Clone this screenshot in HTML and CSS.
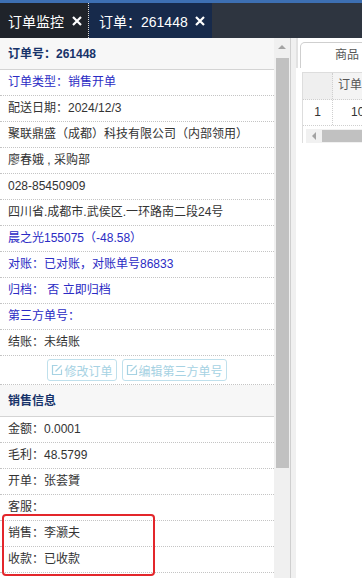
FILE: index.html
```html
<!DOCTYPE html>
<html lang="zh-CN">
<head>
  <meta charset="UTF-8">
  <meta name="viewport" content="width=device-width, initial-scale=1.0">
  <title>订单：261448</title>
  <link rel="stylesheet" href="styles.css">
</head>
<body>

<div class="topline"></div>
<div class="tabbar">
  <div class="tab">
    <span>订单监控</span>
    <svg class="close" viewBox="0 0 10 10"><path d="M1 1L9 9M9 1L1 9"/></svg>
  </div>
  <div class="tab active">
    <span>订单：261448</span>
    <svg class="close" viewBox="0 0 10 10"><path d="M1 1L9 9M9 1L1 9"/></svg>
  </div>
</div>

<div class="main">
  <div class="left">
    <div class="panel-head first">订单号：261448</div>
    <div class="row blue">订单类型：销售开单</div>
    <div class="row">配送日期：2024/12/3</div>
    <div class="row">聚联鼎盛（成都）科技有限公司（内部领用）</div>
    <div class="row">廖春娥 , 采购部</div>
    <div class="row">028-85450909</div>
    <div class="row">四川省.成都市.武侯区.一环路南二段24号</div>
    <div class="row blue">晨之光155075（-48.58）</div>
    <div class="row blue">对账：已对账，对账单号86833</div>
    <div class="row blue">归档： 否 立即归档</div>
    <div class="row blue">第三方单号：</div>
    <div class="row">结账：未结账</div>
    <div class="row btns">
      <button class="btn" disabled>
        <svg viewBox="0 0 12 12"><path d="M6.5 1.5H1.5V10.5H10.5V5.5"/><path d="M4.5 7.5L10.5 1.5"/></svg>修改订单
      </button>
      <button class="btn" disabled>
        <svg viewBox="0 0 12 12"><path d="M6.5 1.5H1.5V10.5H10.5V5.5"/><path d="M4.5 7.5L10.5 1.5"/></svg>编辑第三方单号
      </button>
    </div>
    <div class="panel-head">销售信息</div>
    <div class="row">金额：0.0001</div>
    <div class="row">毛利：48.5799</div>
    <div class="row">开单：张荟贇</div>
    <div class="row">客服：</div>
    <div class="row">销售：李灏夫</div>
    <div class="row">收款：已收款</div>
    <div class="row">结算方式：月结</div>
    <div class="mark"></div>
  </div>

  <div class="vscroll">
    <div class="arrow-up"></div>
    <div class="thumb"></div>
  </div>
  <div class="splitter"></div>

  <div class="right">
    <div class="tabs">
      <div class="tabs-nav"></div>
      <div class="goods-tab">商品</div>
    </div>
    <div class="grid">
      <div class="grid-row head">
        <div class="num"></div>
        <div class="cell">订单号</div>
      </div>
      <div class="grid-row">
        <div class="num">1</div>
        <div class="cell center">10</div>
      </div>
      <div class="hscroll">
        <div class="hs-blank"></div>
        <div class="hs-track">
          <span class="arrow-left"></span>
          <span class="hs-thumb"></span>
        </div>
      </div>
    </div>
  </div>
</div>

</body>
</html>
```

FILE: styles.css
```css
body {
  margin: 0;
  font-family: "Liberation Sans", "Noto Sans CJK SC", sans-serif;
  font-size: 12px;
  color: #333;
  background: #fff;
  overflow: hidden;
}
.topline {
  height: 3px;
  background: #3d6fb2;
}
.tabbar {
  display: flex;
  height: 35px;
  background: #2e3540;
}
.tab {
  display: flex;
  align-items: center;
  gap: 8px;
  padding: 0 6px 0 8px;
  background: #1f232a;
  color: #fff;
  font-size: 14px;
  border-right: 1px dotted #d8d8d8;
}
.tab.active {
  gap: 7px;
  padding: 0 7px 0 10px;
  background: #172a4b;
  border-right: none;
}
.close {
  width: 10px;
  height: 10px;
  stroke: #fff;
  stroke-width: 2.2;
  fill: none;
}
.main {
  display: flex;
  height: 540px;
}
.left {
  position: relative;
  width: 274px;
  overflow: hidden;
}
.panel-head {
  height: 31px;
  line-height: 32px;
  padding: 0 8px;
  font-weight: bold;
  color: #17336a;
  background: #f7f7f7;
  border-bottom: 1px solid #d4d4d4;
}
.panel-head.first {
  line-height: 33px;
}
.row {
  padding: 4px 8px;
  line-height: 17px;
  border-bottom: 1px dotted #c4c4c4;
  white-space: nowrap;
}
.row.blue {
  color: #2b2bc4;
}
.row.btns {
  display: flex;
  justify-content: center;
  gap: 5px;
  padding: 3px 0 2.5px;
  line-height: normal;
}
.btn {
  display: flex;
  align-items: center;
  gap: 1px;
  height: 22px;
  padding: 0 3px;
  font-family: inherit;
  font-size: 12px;
  color: #a6d2e3;
  background: #fff;
  border: 1px solid #bfe0ec;
  border-radius: 3px;
}
.btn svg {
  width: 12px;
  height: 12px;
  fill: none;
  stroke: #a6d2e3;
  stroke-width: 1.2;
}
.mark {
  position: absolute;
  left: 2px;
  top: 476px;
  width: 149px;
  height: 58px;
  border: 2px solid #e3262b;
  border-radius: 4px;
}
.vscroll {
  width: 16px;
  background: #f0f0f0;
  border-right: 1px solid #cfcfcf;
}
.arrow-up {
  width: 0;
  height: 0;
  margin: 7px auto 9px;
  border-left: 4px solid transparent;
  border-right: 4px solid transparent;
  border-bottom: 4px solid #a3a3a3;
}
.thumb {
  width: 13px;
  height: 410px;
  margin-left: 2px;
  background: #c1c1c1;
}
.splitter {
  width: 5px;
  background: #f0f0f0;
}
.right {
  flex: 1;
  overflow: hidden;
  background: #fff;
}
.tabs {
  display: flex;
  align-items: flex-end;
  height: 30px;
}
.tabs-nav {
  width: 4px;
  height: 30px;
  margin-right: 2px;
  background: #f2f2f2;
  border: 1px solid #e2e2e2;
  border-top: none;
  border-radius: 0 0 3px 3px;
}
.goods-tab {
  flex-shrink: 0;
  width: 100px;
  height: 25px;
  line-height: 25px;
  padding-left: 34px;
  color: #555;
  border: 1px solid #cfcfcf;
  border-bottom: none;
  border-radius: 5px 5px 0 0;
}
.grid {
  margin: 4px 0 0 6px;
  border-left: 1px solid #ddd;
  border-top: 1px solid #ddd;
}
.grid-row {
  display: flex;
  height: 25px;
  border-bottom: 1px dotted #cfcfcf;
}
.grid-row.head {
  height: 26px;
  background: #f4f4f4;
}
.num {
  flex-shrink: 0;
  width: 29px;
  line-height: 25px;
  text-align: center;
  border-right: 1px dotted #cfcfcf;
}
.grid-row.head .num {
  background: #efefef;
}
.cell {
  flex-shrink: 0;
  width: 80px;
  line-height: 25px;
  padding-left: 5px;
  color: #555;
}
.cell.center {
  padding-left: 18px;
  color: #333;
}
.hscroll {
  display: flex;
  height: 14px;
  margin-top: 3px;
}
.hs-blank {
  width: 30px;
}
.hs-track {
  flex: 1;
  display: flex;
  align-items: center;
  background: #f1f1f1;
}
.arrow-left {
  width: 0;
  height: 0;
  margin: 0 6px 0 6px;
  border-top: 4px solid transparent;
  border-bottom: 4px solid transparent;
  border-right: 4px solid #a3a3a3;
}
.hs-thumb {
  width: 40px;
  height: 12px;
  background: #c1c1c1;
}
```
